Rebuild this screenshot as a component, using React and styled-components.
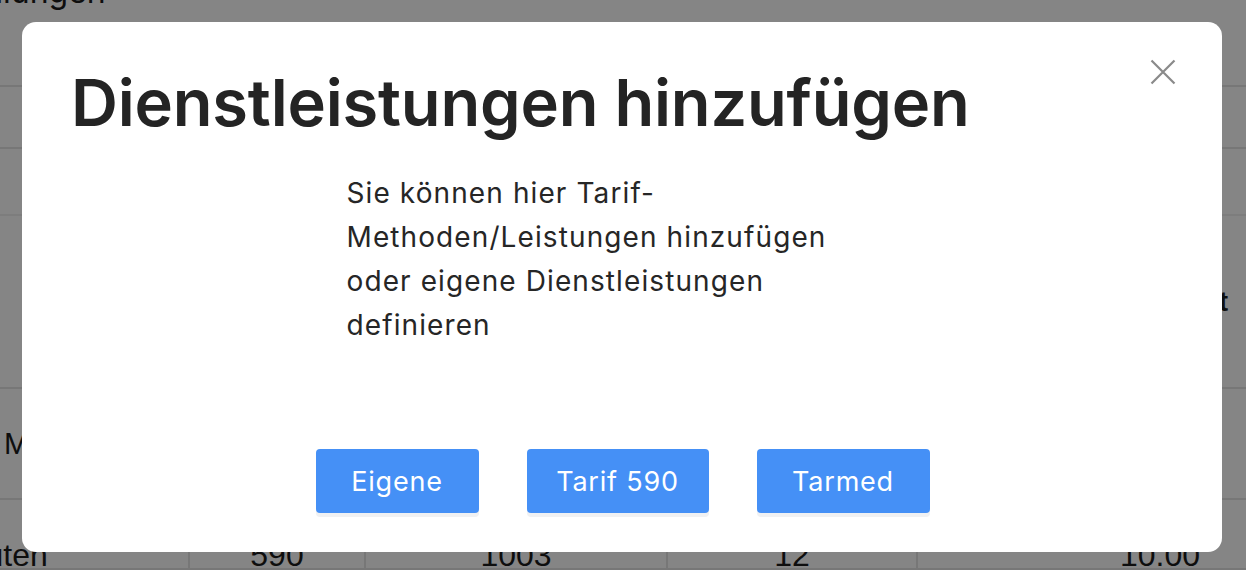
import React from 'react';
import styled, { createGlobalStyle } from 'styled-components';

const GlobalStyle = createGlobalStyle`
    html, body {
        margin: 0;
        padding: 0;
        height: 100%;
        overflow: hidden;
        background: #ffffff;
        font-family: "Inter", "Liberation Sans", sans-serif;
    }
`;

// page behind the dialog
const Page = styled.div`
    width: 1246px;
    height: 570px;
    overflow: hidden;
    color: #1c1c1c;
    font-family: "Liberation Sans", sans-serif;
`;

const PageHeader = styled.div`
    display: flow-root;
    height: 87px;
    box-sizing: border-box;
    border-bottom: 2px solid #e4e4e4;
`;

const PageTitle = styled.div`
    margin-top: -24px;
    font-family: "Inter", sans-serif;
    font-size: 32px;
    line-height: 32px;
    text-indent: -112px;
    white-space: nowrap;
`;

const Row = styled.div`
    display: grid;
    grid-template-columns: 188px 176px 302px 250px 1fr;
    height: ${(p) => p.h}px;
    box-sizing: border-box;
    border-bottom: 2px solid ${(p) => (p.faint ? '#f0f0f0' : '#e4e4e4')};
    font-size: ${(p) => p.size || 28}px;
    line-height: 34px;
`;

const Cell = styled.div`
    display: flex;
    align-items: ${(p) => (p.top ? 'flex-start' : 'center')};
    justify-content: ${(p) => p.align || 'center'};
    border-left: ${(p) => (p.divider ? '2px solid #e4e4e4' : 'none')};
    font-weight: ${(p) => (p.bold ? 700 : 400)};
    font-family: ${(p) => (p.inter ? '"Inter", sans-serif' : 'inherit')};
    padding: ${(p) => p.pad || '0'};
    text-indent: ${(p) => p.indent || 0}px;
    box-sizing: border-box;
    white-space: nowrap;
`;

const Overlay = styled.div`
    position: fixed;
    inset: 0;
    background: rgba(0, 0, 0, 0.48);
    display: flex;
    justify-content: flex-start;
    align-items: flex-start;
    padding: 22px 0 0 22px;
`;

const Modal = styled.div`
    position: relative;
    width: 1200px;
    height: 530px;
    box-sizing: border-box;
    background: #ffffff;
    border-radius: 14px;
    padding: 45px 48px 39px 49px;
    display: flex;
    flex-direction: column;
`;

const CloseButton = styled.button`
    position: absolute;
    top: 37px;
    right: 46px;
    width: 26px;
    height: 26px;
    padding: 0;
    border: none;
    background: transparent;
    cursor: pointer;
    display: flex;
`;

const Title = styled.h1`
    margin: 0;
    font-family: "Inter", sans-serif;
    font-weight: 600;
    font-size: 65px;
    line-height: 72px;
    color: #242424;
    letter-spacing: -0.2px;
    white-space: nowrap;
`;

const Text = styled.p`
    margin: 32px 0 0 0;
    align-self: center;
    width: 552px;
    font-family: "Inter", sans-serif;
    font-size: 28px;
    line-height: 44px;
    letter-spacing: 1.1px;
    color: #262626;
    white-space: nowrap;
`;

const Actions = styled.div`
    margin-top: auto;
    display: flex;
    justify-content: center;
    gap: 48px;
`;

const Button = styled.button`
    width: ${(p) => p.w}px;
    height: 64px;
    padding: 0;
    border: none;
    border-radius: 4px;
    background: #4590f6;
    color: #ffffff;
    font-family: "Inter", sans-serif;
    font-size: 27px;
    font-weight: 400;
    letter-spacing: 0.8px;
    box-shadow: 0 4px 0 #f0f1f3;
    cursor: pointer;
`;

function CloseIcon() {
    return (
        <svg width="26" height="26" viewBox="0 0 26 26">
            <path d="M1.5 1.5 24.5 24.5 M24.5 1.5 1.5 24.5" stroke="#8a8a8a" strokeWidth="2.2" fill="none" />
        </svg>
    );
}

const buttons = [
    { label: 'Eigene', width: 163 },
    { label: 'Tarif 590', width: 182 },
    { label: 'Tarmed', width: 173 },
];

export default function App() {
    return (
        <>
            <GlobalStyle />
            <Page>
                <PageHeader>
                    <PageTitle>Behandlungen</PageTitle>
                </PageHeader>
                <Row h={62} />
                <Row h={67} faint />
                <Row h={173}>
                    <Cell />
                    <Cell />
                    <Cell />
                    <Cell />
                    <Cell bold align="flex-end" pad="0 18px 0 0">Gesamt</Cell>
                </Row>
                <Row h={111}>
                    <Cell inter align="flex-start" pad="0 0 0 4px">Massage</Cell>
                </Row>
                <Row h={70} size={32}>
                    <Cell top align="flex-start" pad="38px 0 0 0" indent={-66}>Minuten</Cell>
                    <Cell top divider pad="38px 0 0 0">590</Cell>
                    <Cell top divider pad="38px 0 0 0">1003</Cell>
                    <Cell top divider pad="38px 0 0 0">12</Cell>
                    <Cell top divider align="flex-end" pad="38px 46px 0 0">10.00</Cell>
                </Row>
            </Page>

            <Overlay>
                <Modal>
                    <CloseButton aria-label="Schliessen">
                        <CloseIcon />
                    </CloseButton>
                    <Title>Dienstleistungen hinzufügen</Title>
                    <Text>
                        Sie können hier Tarif-
                        <br />
                        Methoden/Leistungen hinzufügen
                        <br />
                        oder eigene Dienstleistungen
                        <br />
                        definieren
                    </Text>
                    <Actions>
                        {buttons.map((b) => (
                            <Button key={b.label} w={b.width}>{b.label}</Button>
                        ))}
                    </Actions>
                </Modal>
            </Overlay>
        </>
    );
}
